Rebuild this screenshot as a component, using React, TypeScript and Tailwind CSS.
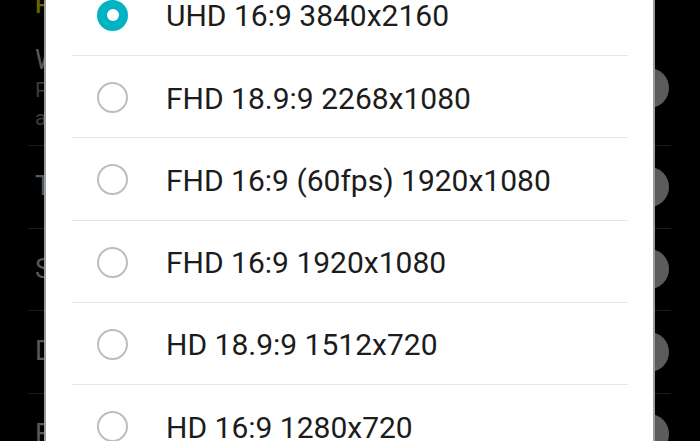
import React from "react";

const options = [
  { label: "UHD 16:9 3840x2160", checked: true },
  { label: "FHD 18.9:9 2268x1080" },
  { label: "FHD 16:9 (60fps) 1920x1080" },
  { label: "FHD 16:9 1920x1080" },
  { label: "HD 18.9:9 1512x720" },
  { label: "HD 16:9 1280x720" },
];

function Toggle() {
  return <div className="ml-auto mr-[2px] h-10 w-10 shrink-0 rounded-full bg-[#5c5c5c]" />;
}

function BgRow({ title }: { title: string }) {
  return (
    <div className="flex h-[82.5px] items-center border-b border-[#1c1c1c] pl-[7px]">
      <span className="text-[27px] leading-[31px] text-[#585858]">{title}</span>
      <Toggle />
    </div>
  );
}

export default function App() {
  return (
    <div
      className="relative h-[441px] w-[700px] overflow-hidden bg-black"
      style={{ fontFamily: "Roboto, 'Noto Sans', sans-serif" }}
    >
      {/* background settings list */}
      <div className="ml-[28px] mt-[-7.5px] w-[643px]">
        <div className="h-[37.5px] pl-[7px] text-[24px] leading-[24px] font-medium text-[#6e6300]">
          Picture
        </div>
        <div className="flex h-[116px] items-start border-b border-[#1c1c1c] pl-[7px] pt-[14.8px]">
          <div className="flex flex-col">
            <span className="text-[27px] leading-[31px] text-[#585858]">Wide angle</span>
            <span className="text-[21px] leading-[28px] text-[#3c3c3c]">Pictures taken with the wide</span>
            <span className="text-[21px] leading-[28px] text-[#3c3c3c]">angle camera</span>
          </div>
          <div className="ml-auto mr-[2px] mt-[23px] h-10 w-10 shrink-0 rounded-full bg-[#5c5c5c]" />
        </div>
        <BgRow title="Tracking AF" />
        <BgRow title="Save options" />
        <BgRow title="Defaults" />
        <BgRow title="Filters" />
      </div>

      {/* dialog */}
      <div className="absolute bottom-0 left-[44px] top-0 w-[611px] border-x-2 border-[#9c9c9c] bg-white">
        <div className="mt-[-26.25px] pl-[26px] pr-[25px]">
          {options.map((o) => (
            <div
              key={o.label}
              className="flex h-[82.25px] items-center border-b border-[#e6e6e6] pl-[25px] pt-[2px]"
            >
              {o.checked ? (
                <div className="flex h-[31px] w-[31px] shrink-0 items-center justify-center rounded-full bg-[#00b2c2]">
                  <div className="h-[12px] w-[12px] rounded-full bg-white" />
                </div>
              ) : (
                <div className="h-[31px] w-[31px] shrink-0 rounded-full border-2 border-[#bdbdbd]" />
              )}
              <span className="ml-[38px] mt-[2px] whitespace-nowrap text-[30px] leading-none text-[#1c1c1c]">
                {o.label}
              </span>
            </div>
          ))}
        </div>
      </div>
    </div>
  );
}
